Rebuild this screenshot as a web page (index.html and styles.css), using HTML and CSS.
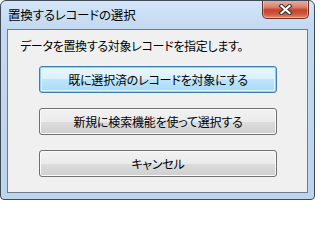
FILE: index.html
```html
<!DOCTYPE html>
<html lang="ja">
<head>
<meta charset="utf-8">
<link rel="stylesheet" href="styles.css">
</head>
<body>
<div class="window">
  <div class="titlebar">
    <span class="title">置換するレコードの選択</span>
    <div class="close">
      <svg width="15" height="11" viewBox="0 0 15 11">
        <path d="M3.5 2 L11.5 9 M11.5 2 L3.5 9" stroke="#33302e" stroke-width="4.2" stroke-linecap="square" fill="none"/>
        <path d="M3.5 2 L11.5 9 M11.5 2 L3.5 9" stroke="#ffffff" stroke-width="2.2" stroke-linecap="square" fill="none"/>
      </svg>
    </div>
  </div>
  <div class="client">
    <div class="label">データを置換する対象レコードを指定します。</div>
    <div class="buttons">
      <button class="btn default">既に選択済のレコードを対象にする</button>
      <button class="btn">新規に検索機能を使って選択する</button>
      <button class="btn">キャンセル</button>
    </div>
  </div>
</div>
</body>
</html>
```
FILE: styles.css
```css
html, body {
  margin: 0;
  padding: 0;
  background: #ffffff;
}
body {
  font-family: "Noto Sans CJK JP", "Noto Sans", sans-serif;
  font-feature-settings: "palt";
}
.window {
  width: 315px;
  height: 200px;
  box-sizing: border-box;
  border: 1px solid #3f4a58;
  border-radius: 6px 6px 4px 4px;
  background: linear-gradient(to bottom, #d3e5f7 0px, #c3d9f0 28px, #bcd4ec 100%);
  display: flex;
  flex-direction: column;
  padding: 0 6px 6px 6px;
  overflow: hidden;
}
.titlebar {
  height: 28px;
  display: flex;
  align-items: flex-start;
  flex: none;
}
.title {
  padding-left: 1px;
  line-height: 28px;
  font-size: 12.5px;
  color: #000;
  letter-spacing: -0.2px;
}
.close {
  margin-left: auto;
  margin-top: -1px;
  margin-right: -1px;
  width: 47px;
  height: 19px;
  box-sizing: border-box;
  border: 1px solid #6b2f27;
  border-top: none;
  border-radius: 0 0 5px 5px;
  background: linear-gradient(to bottom, #eab2a4 0%, #d9816c 40%, #c4422c 55%, #cf5a3f 80%, #e48c6f 100%);
  box-shadow: inset 0 0 0 1px rgba(255,255,255,0.35);
  display: flex;
  align-items: center;
  justify-content: center;
}
.close svg {
  display: block;
}
.client {
  flex: 1;
  border: 1px solid #6d7b8d;
  background: #f0f0f0;
  padding: 8px 0 0 12px;
  display: flex;
  flex-direction: column;
}
.label {
  font-size: 12px;
  line-height: 16px;
  color: #000;
  letter-spacing: -0.3px;
}
.buttons {
  margin-top: 12px;
  display: flex;
  flex-direction: column;
  align-items: flex-start;
  gap: 15px;
  padding-left: 19px;
}
.btn {
  width: 238px;
  height: 27px;
  box-sizing: border-box;
  border: 1px solid #707070;
  border-radius: 3px;
  background: linear-gradient(to bottom, #f2f2f2 0%, #ebebeb 50%, #dddddd 50%, #cfcfcf 100%);
  box-shadow: inset 0 0 0 1px #fafafa;
  font-family: "Noto Sans CJK JP", "Noto Sans", sans-serif;
  font-feature-settings: "palt";
  font-size: 12px;
  color: #000;
  padding: 0;
  line-height: 25px;
  letter-spacing: -0.2px;
}
.btn.default {
  border-color: #3c7fb1;
  background: linear-gradient(to bottom, #eaf6fd 0%, #d9f0fc 50%, #bee6fd 50%, #a7d9f5 100%);
  box-shadow: inset 0 0 0 1px #8fd2f5, inset 0 0 0 2px #dff3fd;
}
```
